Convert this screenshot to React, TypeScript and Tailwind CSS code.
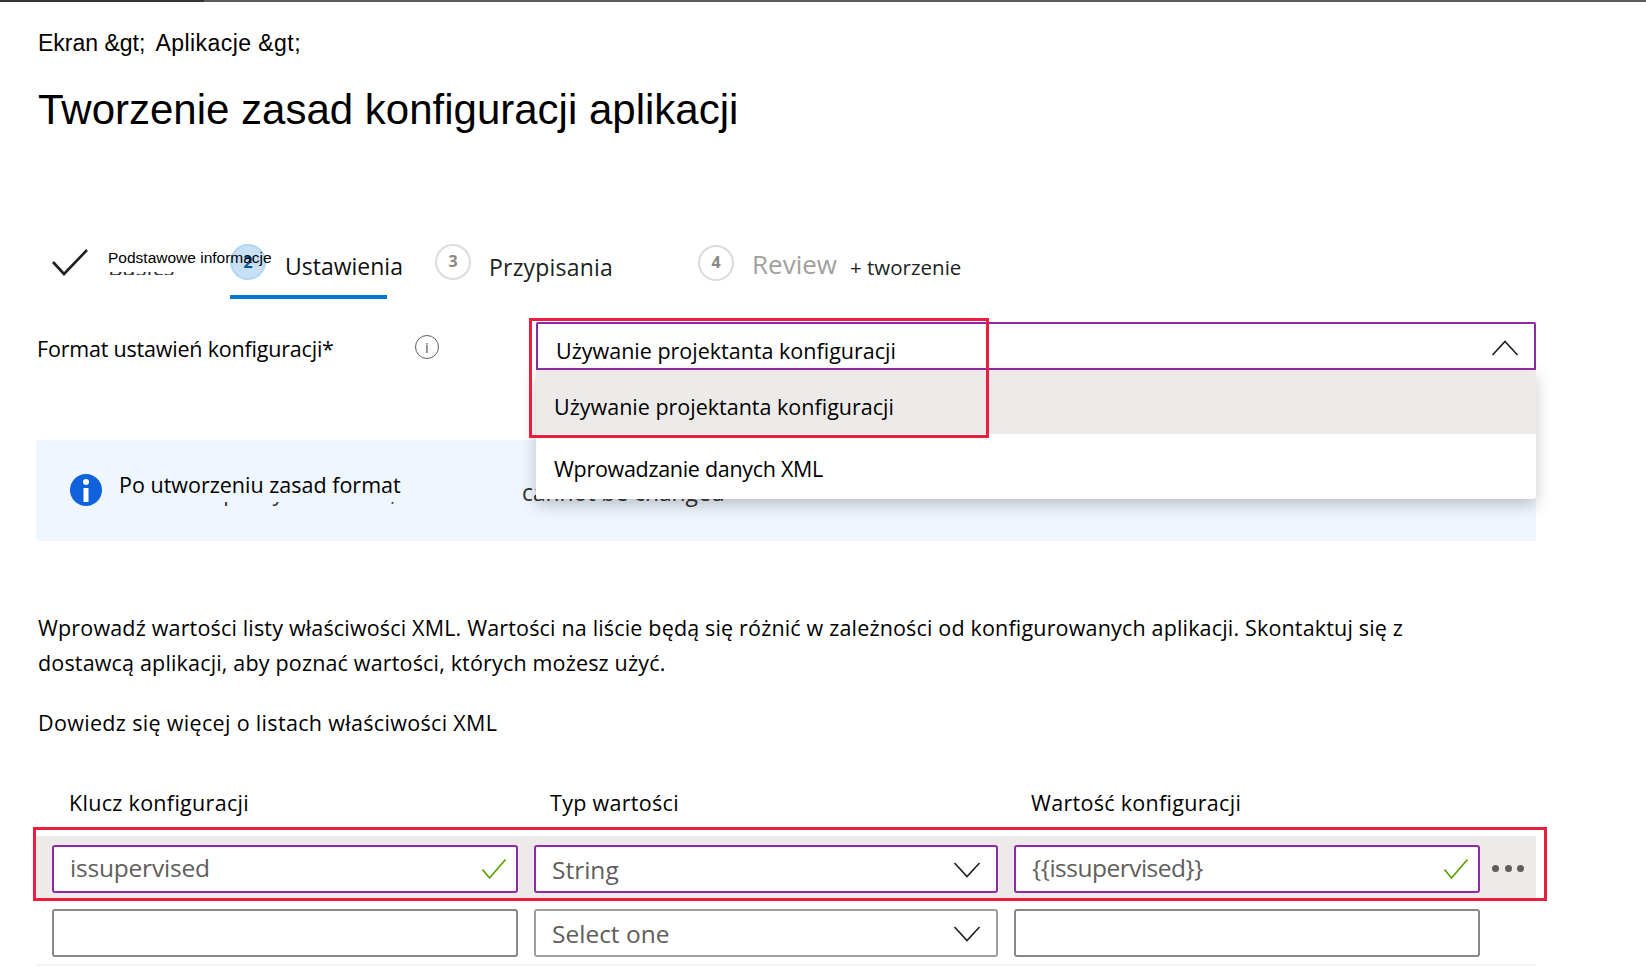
const sans = "font-['Open_Sans',sans-serif]";
const arial = "font-['Liberation_Sans',sans-serif]";

function Chevron({ up = false, className = "" }: { up?: boolean; className?: string }) {
  return (
    <svg width="28" height="16" viewBox="0 0 28 16" fill="none" className={className}>
      <path d={up ? "M1.5 15 14 1.5 26.5 15" : "M1.5 1 14 14.5 26.5 1"} stroke="#201f1e" strokeWidth="1.6" />
    </svg>
  );
}

function Check() {
  return (
    <svg width="26" height="22" viewBox="0 0 26 22" fill="none" className="shrink-0">
      <path d="M1.5 11.5 8.5 20 24.5 1.5" stroke="#57a300" strokeWidth="1.7" />
    </svg>
  );
}

function Step({ n, label, muted = false }: { n: number; label: string; muted?: boolean }) {
  return (
    <div className="flex h-[36px] items-center">
      <span className="flex h-[36px] w-[36px] shrink-0 items-center justify-center rounded-full border-2 border-[#dcdcdc] pb-[3px] text-[16px] font-bold text-[#8a8886]">
        {n}
      </span>
      <span className={muted ? "ml-[18px] mt-[2px] text-[26px] text-[#a19f9d]" : "ml-[18px] mt-[10px] text-[23px] tracking-[0.2px] text-[#201f1e]"}>
        {label}
      </span>
    </div>
  );
}

function TextField({ active = false, value, className = "flex-1", textClass = "" }: { active?: boolean; value?: string; className?: string; textClass?: string }) {
  return (
    <div
      className={`flex h-[48px] items-center justify-between rounded-[3px] border-2 bg-white pl-[16px] pr-[9px] ${className} ${
        active ? "border-[#8e2aa6]" : "border-[#8a8886]"
      }`}
    >
      <span className={`-mt-[2px] text-[24.5px] text-[#605e5c] ${textClass}`}>{value}</span>
      {active && <Check />}
    </div>
  );
}

function SelectField({ active = false, value }: { active?: boolean; value: string }) {
  return (
    <div
      className={`flex h-[48px] w-[464px] shrink-0 items-center justify-between rounded-[3px] border-2 bg-white pl-[16px] pr-[15px] ${
        active ? "border-[#8e2aa6]" : "border-[#a19f9d]"
      }`}
    >
      <span className="mt-[3px] text-[24.5px] text-[#605e5c]">{value}</span>
      <Chevron className="mt-[2px]" />
    </div>
  );
}

export default function App() {
  return (
    <div className={`relative h-[968px] w-[1646px] overflow-hidden bg-white text-black ${sans}`}>
      <div className="flex h-[2px]">
        <div className="w-[204px] bg-[#333333]" />
        <div className="flex-1 bg-[#5a5a5a]" />
      </div>

      <div className="pl-[38px]">
        <p className={`mt-[26px] flex text-[23px] leading-[30px] ${arial}`}>
          <span>Ekran &amp;gt;</span>
          <span className="ml-[10px] tracking-[0.45px]">Aplikacje &amp;gt;</span>
        </p>
        <h1 className={`mt-[24px] text-[42px] leading-[56px] ${arial}`}>Tworzenie zasad konfiguracji aplikacji</h1>
      </div>

      {/* wizard steps */}
      <div className="relative mt-[106px] flex h-[56px] items-start">
        <svg width="38" height="28" viewBox="0 0 38 28" fill="none" className="ml-[51px] mt-[4px] shrink-0">
          <path d="M2 14 13 26 36 2" stroke="#201f1e" strokeWidth="2.6" />
        </svg>
        <div className="ml-[19px] w-[122px] shrink-0 pt-[28px]">
          <div className="h-[3px] overflow-hidden">
            <div className="-mt-[17px] text-[23px] leading-[24px] text-[#323130]">Basics</div>
          </div>
        </div>
        <div className="relative flex w-[157px] shrink-0 items-start border-b-[4px] border-[#0078d4] pb-[14px]">
          <span className="flex h-[36px] w-[36px] shrink-0 items-center justify-center rounded-full border-2 border-[#b3d6f2] bg-[#c7e0f4] text-[16px] font-bold text-[#005a9e]">
            2
          </span>
          <span className="ml-[19px] mt-[7px] whitespace-nowrap text-[23px] leading-[30px] text-[#111111]">Ustawienia</span>
        </div>
        <div className="ml-[48px]">
          <Step n={3} label="Przypisania" />
        </div>
        <div className="ml-[85px] flex items-center">
          <Step n={4} label="Review" muted />
          <span className="ml-[13px] mt-[8px] text-[20.5px] text-[#201f1e]">+ tworzenie</span>
        </div>
        <span className={`absolute left-[108px] top-[4px] text-[15.5px] leading-[20px] ${arial}`}>
          Podstawowe informacje
        </span>
      </div>

      {/* format setting */}
      <div className="mt-[22px] flex h-[48px] pr-[110px]">
        <div className="flex w-[536px] shrink-0 pl-[37px]">
          <span className="mt-[9px] w-[378px] text-[21.5px] leading-[36px] tracking-[-0.2px]">Format ustawień konfiguracji*</span>
          <span className="mt-[13px] flex h-[24px] w-[24px] items-center justify-center rounded-full border-[1.5px] border-[#605e5c] text-[15px] leading-none text-[#605e5c]">
            i
          </span>
        </div>
        <div className="flex flex-1 items-center justify-between rounded-t-[2px] border-2 border-[#8e2aa6] bg-white pl-[18px] pr-[15px]">
          <span className="mt-[10px] text-[21.5px]">Używanie projektanta konfiguracji</span>
          <Chevron up className="mt-[3px]" />
        </div>
      </div>

      {/* notice */}
      <div className="relative ml-[36px] mr-[110px] mt-[70px] flex h-[101px] items-start rounded-[3px] bg-[#eff6fe]">
        <span className="ml-[34px] mt-[34px] flex h-[32px] w-[32px] shrink-0 items-center justify-center rounded-full bg-[#0f62dc]">
          <svg width="8" height="24" viewBox="0 0 8 24" fill="#ffffff">
            <circle cx="4" cy="4" r="3" />
            <rect x="1.5" y="10" width="5" height="14" />
          </svg>
        </span>
        <div className="ml-[17px] mt-[38px] flex items-baseline whitespace-nowrap text-[22px] leading-[28px] text-[#323130]">
          <span className="w-[403px] pl-[29px] tracking-[0.15px]">After a policy is created,</span>
          <span className="text-[22.8px]">cannot be changed</span>
        </div>
        <div className="absolute left-[79px] top-[20px] h-[42px] w-[404px] bg-[#eff6fe] pl-[4px] pt-[8px] text-[21.5px] leading-[34px]">
          Po utworzeniu zasad format
        </div>
      </div>

      {/* description */}
      <div className="ml-[38px] mr-[200px] mt-[69px] text-[21.5px] leading-[35px]">
        <p className="tracking-[0.17px]">
          Wprowadź wartości listy właściwości XML. Wartości na liście będą się różnić w zależności od konfigurowanych
          aplikacji. Skontaktuj się z dostawcą aplikacji, aby poznać wartości, których możesz użyć.
        </p>
        <p className="mt-[25px] tracking-[0.33px]">Dowiedz się więcej o listach właściwości XML</p>
      </div>

      {/* key/value table */}
      <div className="ml-[36px] mr-[110px] mt-[45px]">
        <div className="flex h-[36px] items-center text-[21.5px] tracking-[0.3px]">
          <span className="ml-[33px] w-[481px]">Klucz konfiguracji</span>
          <span className="w-[481px]">Typ wartości</span>
          <span>Wartość konfiguracji</span>
        </div>
        <div className="mt-[15px] flex h-[62px] items-center gap-[12px] bg-[#edebe9] pl-[16px] pr-[12px] pt-[4px]">
          <div className="flex flex-1 gap-[16px]">
            <TextField active value="issupervised" className="w-[466px] shrink-0" textClass="tracking-[-0.2px]" />
            <SelectField active value="String" />
            <TextField active value="{{issupervised}}" textClass="tracking-[-0.5px]" />
          </div>
          <div className="-mt-[2px] flex w-[32px] shrink-0 justify-between">
            <span className="h-[7px] w-[7px] rounded-full bg-[#605e5c]" />
            <span className="h-[7px] w-[7px] rounded-full bg-[#605e5c]" />
            <span className="h-[7px] w-[7px] rounded-full bg-[#605e5c]" />
          </div>
        </div>
        <div className="flex h-[68px] items-center gap-[16px] border-b-[2px] border-[#f3f2f1] pb-[2px] pl-[16px] pr-[56px] pt-[6px]">
          <TextField className="w-[466px] shrink-0" />
          <SelectField value="Select one" />
          <TextField />
        </div>
      </div>

      {/* open dropdown list */}
      <div className="absolute left-[536px] top-[370px] w-[1000px] rounded-b-[3px] bg-white text-[21.5px] shadow-[0_6px_16px_rgba(0,0,0,0.22)]">
        <div className="flex h-[64px] items-center bg-[#edebe9] pl-[18px] pt-[10px]">Używanie projektanta konfiguracji</div>
        <div className="flex h-[65px] items-center pl-[18px] pt-[5px] tracking-[-0.3px]">Wprowadzanie danych XML</div>
      </div>

      {/* annotation boxes */}
      <div className="absolute left-[529px] top-[318px] h-[120px] w-[460px] border-[3px] border-[#ee1c3e]" />
      <div className="absolute left-[33px] top-[827px] h-[74px] w-[1514px] border-[3px] border-[#ee1c3e]" />
    </div>
  );
}
